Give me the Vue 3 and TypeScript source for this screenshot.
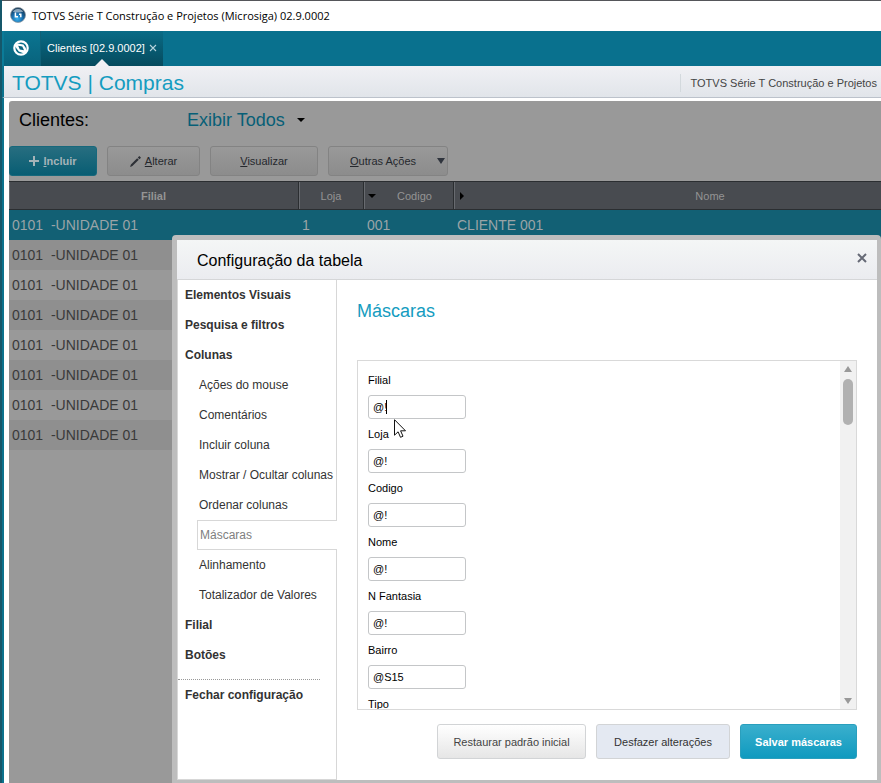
<script setup lang="ts">
import { ref } from 'vue'

interface MaskField {
  id: string
  label: string
  value: string
}

interface MenuItem {
  label: string
  kind: 'section' | 'item'
}

const rows = ref([
  { filial: '0101\u00a0 -UNIDADE 01', loja: '1', codigo: '001', nome: 'CLIENTE 001' },
  ...Array.from({ length: 7 }, () => ({
    filial: '0101\u00a0 -UNIDADE 01', loja: '', codigo: '', nome: '',
  })),
])

const menu: MenuItem[] = [
  { label: 'Elementos Visuais', kind: 'section' },
  { label: 'Pesquisa e filtros', kind: 'section' },
  { label: 'Colunas', kind: 'section' },
  { label: 'Ações do mouse', kind: 'item' },
  { label: 'Comentários', kind: 'item' },
  { label: 'Incluir coluna', kind: 'item' },
  { label: 'Mostrar / Ocultar colunas', kind: 'item' },
  { label: 'Ordenar colunas', kind: 'item' },
  { label: 'Máscaras', kind: 'item' },
  { label: 'Alinhamento', kind: 'item' },
  { label: 'Totalizador de Valores', kind: 'item' },
  { label: 'Filial', kind: 'section' },
  { label: 'Botões', kind: 'section' },
]
const active = ref('Máscaras')

const fields = ref<MaskField[]>([
  { id: 'filial', label: 'Filial', value: '@!' },
  { id: 'loja', label: 'Loja', value: '@!' },
  { id: 'codigo', label: 'Codigo', value: '@!' },
  { id: 'nome', label: 'Nome', value: '@!' },
  { id: 'fantasia', label: 'N Fantasia', value: '@!' },
  { id: 'bairro', label: 'Bairro', value: '@S15' },
  { id: 'tipo', label: 'Tipo', value: '@!' },
])
</script>

<template>
  <div class="window">
    <header class="titlebar">
      <svg class="app-icon" viewBox="0 0 16 16" aria-hidden="true">
        <defs>
          <radialGradient id="orb" cx="45%" cy="75%" r="70%">
            <stop offset="0" stop-color="#38b0ec" />
            <stop offset="0.5" stop-color="#1a6fae" />
            <stop offset="1" stop-color="#123552" />
          </radialGradient>
        </defs>
        <circle cx="8" cy="8" r="7.5" fill="url(#orb)" stroke="#8d99a3" stroke-width="0.8" />
        <path d="M2.5 4.5Q8-1 13.5 4.5Q8 6.5 2.5 4.5Z" fill="#b9cbd8" opacity="0.7" />
        <path d="M5.4 5.4v4.4H8M9 7.2h1.8v3" fill="none" stroke="#fff" stroke-width="1.5" />
      </svg>
      <span>TOTVS Série T Construção e Projetos (Microsiga) 02.9.0002</span>
    </header>

    <nav class="tabs">
      <a class="home" href="#" aria-label="Início">
        <svg viewBox="0 0 16 16" aria-hidden="true">
          <circle cx="8" cy="8" r="6.7" fill="none" stroke="#fff" stroke-width="2.2" />
          <path d="M1.5 5.4 4.6 3.4 10.4 4.6 13 8.2V12L11 13.4 5.8 11.4 3.6 8.4Z" fill="#fff" />
          <path d="M5.2 5.8 9.3 6.5 11 10.2 6.8 9.5Z" fill="#0a647e" />
        </svg>
      </a>
      <div class="tab">
        <a href="#">Clientes [02.9.0002]</a>
        <button type="button" class="tab-close" aria-label="Fechar aba">
          <svg viewBox="0 0 8 8"><path d="M1 1 7 7M7 1 1 7" stroke="#b7d3dc" stroke-width="1.1" /></svg>
        </button>
      </div>
    </nav>

    <div class="brand">
      <h1>TOTVS | Compras</h1>
      <span class="product">TOTVS Série T Construção e Projetos</span>
    </div>

    <main class="panel">
      <div class="view">
        <h2>Clientes:</h2>
        <button type="button" class="filter">
          Exibir Todos
          <svg viewBox="0 0 8 4"><path d="M0 0H8L4 4Z" fill="#000" /></svg>
        </button>
      </div>

      <div class="actions">
        <button type="button" class="act primary">
          <svg class="plus" viewBox="0 0 10 10"><path d="M5 0V10M0 5H10" stroke="#a5b3b8" stroke-width="2" /></svg>
          <span><u>I</u>ncluir</span>
        </button>
        <button type="button" class="act edit">
          <svg class="pencil" viewBox="0 0 12 12"><path d="M0 12 1 9.4 7.8 2.4 9.6 4.2 2.6 11ZM8.5 1.7 10.2 0 12 1.8 10.3 3.5Z" fill="#2d3036" /></svg>
          <span><u>A</u>lterar</span>
        </button>
        <button type="button" class="act show"><span><u>V</u>isualizar</span></button>
        <button type="button" class="act more">
          <span><u>O</u>utras Ações</span>
          <svg class="down" viewBox="0 0 8 6"><path d="M0 0H8L4 6Z" fill="#2f343d" /></svg>
        </button>
      </div>

      <div class="grid">
        <table>
          <colgroup>
            <col class="c-filial"><col class="c-loja"><col class="c-codigo"><col>
          </colgroup>
          <thead>
            <tr>
              <th class="strong">Filial</th>
              <th>Loja</th>
              <th><div class="sorted">
                <svg viewBox="0 0 8 8"><path d="M0 2H8L4 6Z" fill="#000" /></svg><span>Codigo</span>
              </div></th>
              <th><div class="sorted">
                <svg viewBox="0 0 8 8"><path d="M2 0V8L6 4Z" fill="#000" /></svg><span>Nome</span>
              </div></th>
            </tr>
          </thead>
          <tbody>
            <tr v-for="(row, i) in rows" :key="i" :class="{ current: i === 0 }">
              <td>{{ row.filial }}</td>
              <td>{{ row.loja }}</td>
              <td>{{ row.codigo }}</td>
              <td>{{ row.nome }}</td>
            </tr>
          </tbody>
        </table>
      </div>
    </main>

    <section class="dialog" role="dialog" aria-labelledby="dialog-title">
      <header class="dialog-head">
        <h2 id="dialog-title">Configuração da tabela</h2>
        <button type="button" class="dialog-close" aria-label="Fechar">
          <svg viewBox="0 0 10 10"><path d="M1 1 9 9M9 1 1 9" stroke="#666a76" stroke-width="2" /></svg>
        </button>
      </header>

      <div class="dialog-body">
        <nav class="menu">
          <a
            v-for="item in menu"
            :key="item.label"
            href="#"
            :class="[item.kind, { active: item.label === active }]"
            @click.prevent="active = item.label"
          >{{ item.label }}</a>
          <hr>
          <a href="#" class="section">Fechar configuração</a>
        </nav>

        <form class="content" @submit.prevent>
          <h3>Máscaras</h3>
          <div class="list">
            <div class="fields">
              <div v-for="(field, i) in fields" :key="field.id" class="field">
                <label :for="field.id">{{ field.label }}</label>
                <div class="box">
                  <input :id="field.id" v-model="field.value" type="text">
                  <i v-if="i === 0" class="caret" />
                  <svg v-if="i === 0" class="pointer" viewBox="0 0 12 19">
                    <path d="M.5.7V16.2L4.1 12.8 6.5 18.3 9 17.2 6.6 11.8H11.5Z" fill="#fff" stroke="#111" stroke-width="1" />
                  </svg>
                </div>
              </div>
            </div>
            <div class="scroll">
              <svg viewBox="0 0 8 6"><path d="M4 0 8 6H0Z" fill="#999" /></svg>
              <span class="thumb" />
              <svg viewBox="0 0 8 6"><path d="M0 0H8L4 6Z" fill="#999" /></svg>
            </div>
          </div>
          <footer>
            <button type="button" class="cmd reset">Restaurar padrão inicial</button>
            <button type="button" class="cmd undo">Desfazer alterações</button>
            <button type="submit" class="cmd save">Salvar máscaras</button>
          </footer>
        </form>
      </div>
    </section>
  </div>
</template>

<style>
body {
  background: #fff;
}
</style>

<style scoped>
* {
  box-sizing: border-box;
}

.window {
  position: relative;
  display: flex;
  flex-direction: column;
  min-height: 100vh;
  overflow: hidden;
  border-left: 2px solid #15576a;
  font-family: "Liberation Sans", Arial, sans-serif;
  font-size: 11px;
  color: #000;
}

h1,
h2,
h3 {
  margin: 0;
  font-weight: 400;
}

button {
  padding: 0;
  border: 0;
  background: none;
  font: inherit;
  color: inherit;
}

a {
  color: inherit;
  text-decoration: none;
}

svg {
  display: block;
  flex: none;
}

.titlebar {
  display: flex;
  align-items: center;
  gap: 6px;
  height: 31px;
  padding: 0 0 2px 8px;
  border-top: 1px solid #55565a;
  background: #fff;
  font-family: "Open Sans", "Noto Sans", sans-serif;
  font-size: 11px;
  white-space: nowrap;
}

.app-icon {
  width: 16px;
  height: 16px;
}

.tabs {
  display: flex;
  height: 35px;
  background: #09718e;
  border-left: 2px solid #0b7b98;
}

.home {
  display: flex;
  align-items: center;
  justify-content: center;
  width: 37px;
  padding: 0 3px 2px 0;
  border-right: 1px solid #0f6178;
  background: linear-gradient(#0b7592, #08637c);
}

.home svg {
  width: 16px;
  height: 16px;
}

.tab {
  position: relative;
  display: flex;
  align-items: center;
  gap: 4px;
  padding: 0 6px 2px;
  background: linear-gradient(#096b86, #064b5e);
  color: #fff;
  white-space: nowrap;
}

.tab::after {
  position: absolute;
  bottom: 0;
  left: 50%;
  border: solid transparent;
  border-width: 0 7px 7px;
  border-bottom-color: #f1f1f5;
  transform: translateX(-50%);
  content: "";
}

.tab-close svg {
  width: 8px;
  height: 8px;
}

.brand {
  display: flex;
  align-items: center;
  justify-content: space-between;
  height: 32px;
  padding: 2px 4px 0 8px;
  border-left: 2px solid #0b728d;
  border-bottom: 1px solid #bcc2cb;
  background: linear-gradient(#f0f0f4, #e1e5ea);
  white-space: nowrap;
}

.brand h1 {
  font-size: 21px;
  color: #149cc0;
}

.product {
  padding: 3px 0 3px 10px;
  border-left: 1px solid #d3d9dd;
  color: #444;
}

.panel {
  flex: 1;
  padding: 3px 0 0 5px;
  border-left: 2px solid #0b728d;
  background: #fff;
}

.view {
  display: flex;
  align-items: center;
  height: 45px;
  padding: 0 10px 7px;
  border-radius: 3px 0 0;
  background: #999;
  font-size: 18px;
  white-space: nowrap;
}

.view h2 {
  width: 168px;
  font-size: 18px;
}

.filter {
  display: flex;
  align-items: center;
  gap: 12px;
  color: #075f77;
}

.filter svg {
  width: 8px;
  height: 4px;
}

.actions {
  display: flex;
  gap: 10px;
  height: 35px;
  padding-bottom: 5px;
  background: #999;
}

.act {
  display: flex;
  align-items: center;
  justify-content: center;
  gap: 4px;
  border: 1px solid #838383;
  border-radius: 3px;
  background: linear-gradient(#999, #8c8c8c);
  color: #25282d;
}

.act.primary {
  width: 88px;
  border-color: #17687c;
  background: linear-gradient(#276e80, #085d73);
  color: #a5b3b8;
  font-weight: 700;
}

.edit {
  width: 93px;
}

.show {
  width: 108px;
}

.more {
  width: 120px;
}

.act.more {
  justify-content: space-between;
  padding: 0 2px 0 21px;
}

.plus {
  width: 10px;
  height: 10px;
}

.pencil {
  width: 11px;
  height: 11px;
}

.down {
  width: 8px;
  height: 6px;
}

.grid {
  min-height: 602px;
  overflow: hidden;
  background: #999;
}

table {
  width: calc(100% + 74px);
  border-collapse: separate;
  border-spacing: 0;
  table-layout: fixed;
}

.c-filial {
  width: 290px;
}

.c-loja {
  width: 65px;
}

.c-codigo {
  width: 90px;
}

th {
  height: 29px;
  padding: 0;
  border: solid #2b2e31;
  border-width: 1px 1px 1px 0;
  background: #484b50;
  box-shadow: inset 1px 0 #686b70;
  color: #949494;
  font-weight: 400;
}

.strong {
  font-weight: 700;
}

.sorted {
  display: flex;
  align-items: center;
  padding-left: 4px;
}

.sorted span {
  flex: 1;
}

.sorted svg {
  width: 8px;
  height: 8px;
}

td {
  height: 30px;
  padding: 0 3px;
  font-size: 14px;
  color: #3a3a3a;
  white-space: nowrap;
}

tbody tr:nth-child(even) {
  background: #8f8f8f;
}

tbody .current {
  background: #126074;
}

.current td {
  color: #9aa4a7;
}

.dialog {
  position: absolute;
  inset: 235px 0 0 170px;
  display: flex;
  flex-direction: column;
  border: solid #bdbdbd;
  border-width: 5px 4px 3px 5px;
  border-radius: 4px 4px 0 0;
  background: #fff;
}

.dialog-head {
  display: flex;
  align-items: center;
  justify-content: space-between;
  height: 40px;
  padding: 2px 10px 0 20px;
  border-bottom: 1px solid #d5d6d8;
  background: linear-gradient(#f4f6f6, #ebecf0);
}

.dialog-head h2 {
  font-size: 16px;
}

.dialog-close {
  padding-bottom: 6px;
}

.dialog-close svg {
  width: 10px;
  height: 10px;
}

.dialog-body {
  display: flex;
  flex: 1;
  min-height: 0;
}

.menu {
  display: flex;
  flex-direction: column;
  width: 160px;
  border: solid #d7d7d7;
  border-width: 0 0 1px 1px;
  box-shadow: inset -1px 0 #d7d7d7;
  font-size: 12px;
  line-height: 30px;
  color: #333;
  white-space: nowrap;
}

.section {
  padding-left: 7px;
  font-weight: 700;
}

.item {
  padding-left: 21px;
}

.item.active {
  margin-left: 19px;
  padding-left: 2px;
  border: solid #d7d7d7;
  border-width: 1px 0 1px 1px;
  background: #fff;
  line-height: 28px;
  color: #808080;
}

hr {
  width: 142px;
  height: 10px;
  margin: 0;
  border: 0;
  border-bottom: 1px dotted #999;
}

.content {
  display: flex;
  flex: 1;
  flex-direction: column;
  min-width: 0;
  padding: 20px 20px 21px;
}

.content h3 {
  height: 60px;
  font-size: 18px;
  line-height: 22px;
  color: #149cc0;
}

.list {
  display: flex;
  flex: 1;
  min-height: 0;
  border: 1px solid #d9d9d9;
}

.fields {
  flex: 1;
  padding: 9px 10px 0;
  overflow: hidden;
}

.field {
  display: flex;
  flex-direction: column;
  gap: 5px;
  padding-bottom: 5px;
}

label {
  line-height: 20px;
}

.box {
  position: relative;
  width: 98px;
}

input {
  display: block;
  width: 100%;
  height: 24px;
  padding: 0 4px;
  border: 1px solid #c4c6c8;
  border-radius: 3px;
  background: #fff;
  font: inherit;
  color: #000;
}

.caret {
  position: absolute;
  top: 5px;
  left: 18px;
  width: 1px;
  height: 14px;
  background: #000;
}

.pointer {
  position: absolute;
  z-index: 1;
  top: 24px;
  left: 26px;
  width: 12px;
  height: 19px;
}

.scroll {
  display: flex;
  flex-direction: column;
  align-items: center;
  gap: 7px;
  width: 16px;
  padding: 5px 0;
  background: #f1f1f1;
}

.scroll svg {
  width: 8px;
  height: 6px;
}

.thumb {
  width: 10px;
  height: 46px;
  margin-bottom: auto;
  border-radius: 5px;
  background: #b1b1b1;
}

footer {
  display: flex;
  justify-content: flex-end;
  gap: 10px;
  padding-top: 14px;
}

.cmd {
  height: 35px;
  border: 1px solid #d2d4d6;
  border-radius: 3px;
  white-space: nowrap;
}

.reset {
  width: 149px;
  background: linear-gradient(#fff, #e6e6e6);
  color: #444;
}

.undo {
  width: 134px;
  background: #e4e9f2;
  color: #333;
}

.save {
  width: 117px;
  border-color: #2a9fbd;
  background: linear-gradient(#3aafcd, #0f9abf);
  color: #fff;
  font-weight: 700;
}
</style>
